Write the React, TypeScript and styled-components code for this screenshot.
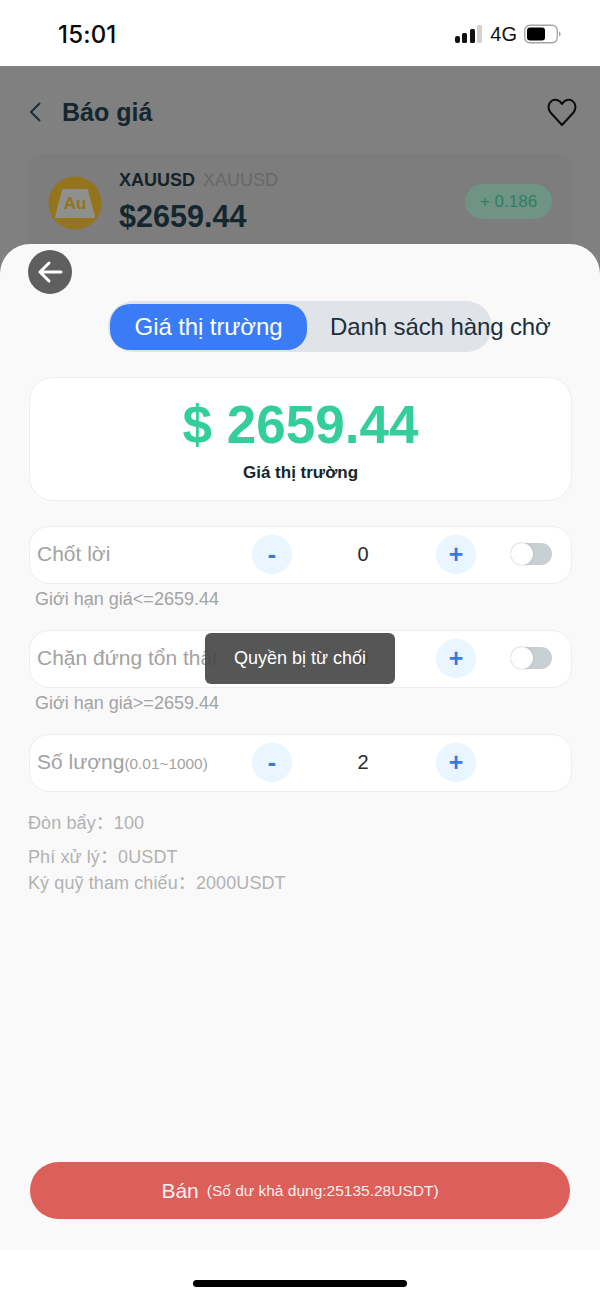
import styled, { createGlobalStyle } from "styled-components";

const GlobalStyle = createGlobalStyle`
    html, body {
        margin: 0;
        padding: 0;
        background: #ffffff;
        font-family: "Liberation Sans", Arial, sans-serif;
    }
    * {
        box-sizing: border-box;
    }
`;

const Screen = styled.div`
    position: relative;
    width: 600px;
    height: 1298px;
    display: flex;
    flex-direction: column;
    overflow: hidden;
    background: #ffffff;
`;

const StatusBar = styled.div`
    height: 66px;
    flex: none;
    display: flex;
    align-items: center;
    justify-content: space-between;
    padding: 2px 39px 0 58px;
    background: #ffffff;
`;

const Clock = styled.span`
    font-size: 24px;
    font-weight: 500;
    color: #0a0a0a;
    font-family: "Inter", "Liberation Sans", sans-serif;
    letter-spacing: 0.2px;
`;

const StatusIcons = styled.div`
    display: flex;
    align-items: center;
    gap: 7px;
`;

const NetworkLabel = styled.span`
    font-size: 20px;
    color: #111111;
`;

const Backdrop = styled.div`
    height: 208px;
    flex: none;
    background: #808080;
    overflow: hidden;
    padding: 0 23px 0 28px;
`;

const NavBar = styled.div`
    height: 88px;
    padding-top: 4px;
    display: flex;
    align-items: center;
`;

const NavTitle = styled.h1`
    margin: 0 0 0 18px;
    flex: 1;
    font-size: 25px;
    font-weight: 700;
    color: #14262e;
`;

const QuoteCard = styled.div`
    height: 120px;
    width: 544px;
    display: flex;
    align-items: flex-start;
    padding: 14px 20px 0 20px;
    background: #7d7d7d;
    border-radius: 12px 12px 0 0;
`;

const LogoSlot = styled.div`
    flex: none;
    padding-top: 8px;
`;

const QuoteText = styled.div`
    flex: 1;
    margin-left: 17px;
`;

const SymbolLine = styled.div`
    font-size: 18px;
    line-height: 24px;
    font-weight: 700;
    color: #14232a;
    span {
        font-weight: 400;
        color: #686868;
        margin-left: 8px;
    }
`;

const QuotePrice = styled.div`
    margin-top: 6px;
    font-size: 30.6px;
    line-height: 36px;
    font-weight: 700;
    color: #14262e;
`;

const ChangeBadge = styled.div`
    margin-top: 16px;
    width: 87px;
    height: 35px;
    border-radius: 18px;
    background: #6f9384;
    color: #2f8062;
    font-size: 17px;
    display: flex;
    align-items: center;
    justify-content: center;
`;

const Sheet = styled.section`
    position: relative;
    margin-top: -30px;
    height: 1006px;
    flex: none;
    padding: 6px 28px 0;
    display: flex;
    flex-direction: column;
    background: #f9f9fa;
    border-radius: 30px 30px 0 0;
`;

const BackCircle = styled.div`
    width: 44px;
    height: 44px;
    flex: none;
    border-radius: 50%;
    background: #5f5f5f;
    display: flex;
    align-items: center;
    justify-content: center;
`;

const Tabs = styled.div`
    margin: 7px 0 0 80px;
    width: 384px;
    height: 51px;
    flex: none;
    display: flex;
    align-items: center;
    padding-left: 2px;
    border-radius: 26px;
    background: #e0e3e8;
`;

const Tab = styled.div<{ $active?: boolean }>`
    flex: none;
    width: ${(p) => (p.$active ? "197px" : "auto")};
    height: 46px;
    display: flex;
    align-items: center;
    justify-content: center;
    white-space: nowrap;
    font-size: 24px;
    letter-spacing: -0.1px;
    border-radius: 20px;
    margin-left: ${(p) => (p.$active ? "0" : "23px")};
    background: ${(p) => (p.$active ? "#3a7cf6" : "transparent")};
    color: ${(p) => (p.$active ? "#ffffff" : "#1c2f3a")};
`;

const PriceCard = styled.div`
    margin: 25px 0 0 1px;
    width: 543px;
    height: 124px;
    flex: none;
    display: flex;
    flex-direction: column;
    align-items: center;
    background: #ffffff;
    border: 1px solid #eeeeef;
    border-radius: 24px;
`;

const BigPrice = styled.div`
    margin-top: 18px;
    height: 58px;
    line-height: 58px;
    font-size: 53px;
    font-weight: 700;
    color: #34cf98;
`;

const BigLabel = styled.div`
    margin-top: 9px;
    font-size: 17px;
    font-weight: 700;
    color: #14262e;
`;

const FieldRow = styled.div<{ $first?: boolean }>`
    margin: ${(p) => (p.$first ? "25px" : "0")} 0 0 1px;
    width: 543px;
    height: 58px;
    flex: none;
    display: grid;
    grid-template-columns: 215px 40px 144px 40px 35px 41px;
    align-items: center;
    padding: 0 0 2px 7px;
    background: #ffffff;
    border: 1px solid #eeeeef;
    border-radius: 20px;
`;

const FieldLabel = styled.div`
    font-size: 21px;
    color: #a2a2a2;
    white-space: nowrap;
    small {
        font-size: 15.4px;
    }
`;

const StepButton = styled.div`
    width: 40px;
    height: 39px;
    border-radius: 50%;
    background: #e9f5ff;
    color: #3a78de;
    display: flex;
    align-items: center;
    justify-content: center;
    font-size: 25px;
    font-weight: 700;
`;

const FieldValue = styled.div`
    text-align: center;
    padding-right: 2px;
    font-size: 20px;
    color: #2b2b2b;
`;

const Toggle = styled.div`
    grid-column: 6;
    position: relative;
    width: 41px;
    height: 22px;
    border-radius: 11px;
    background: #c8d0d4;
    &::after {
        content: "";
        position: absolute;
        left: 0;
        top: 0;
        width: 22px;
        height: 22px;
        border-radius: 50%;
        background: #ffffff;
        box-shadow: 0 0 2px rgba(0, 0, 0, 0.25);
    }
`;

const Hint = styled.div`
    height: 46px;
    flex: none;
    padding: 5px 0 0 7px;
    font-size: 18px;
    line-height: 20px;
    color: #a3a3a3;
`;

const InfoList = styled.div`
    margin-top: 21px;
    display: flex;
    flex-direction: column;
    font-family: "Liberation Sans", "Noto Sans CJK SC", sans-serif;
    font-size: 18px;
    line-height: 20px;
    letter-spacing: 0.1px;
    color: #b2b2b2;
`;

const InfoLine = styled.div<{ $gap?: number }>`
    margin-top: ${(p) => p.$gap ?? 0}px;
`;

const SellButton = styled.div`
    margin: auto 0 31px 2px;
    width: 540px;
    height: 57px;
    flex: none;
    border-radius: 29px;
    background: #dd5f59;
    color: #fdf1f0;
    display: flex;
    align-items: center;
    justify-content: center;
    font-size: 21px;
    small {
        font-size: 15.5px;
        margin-left: 8px;
    }
`;

const HomeArea = styled.div`
    flex: 1;
    display: flex;
    justify-content: center;
    padding-top: 30px;
    background: #ffffff;
`;

const HomeBar = styled.div`
    width: 214px;
    height: 7px;
    border-radius: 4px;
    background: #000000;
`;

const Toast = styled.div`
    position: absolute;
    left: 205px;
    top: 633px;
    width: 190px;
    height: 51px;
    display: flex;
    align-items: center;
    justify-content: center;
    border-radius: 6px;
    background: rgba(72, 72, 72, 0.92);
    color: #ffffff;
    font-size: 18px;
`;

function SignalIcon() {
    return (
        <svg width="29" height="20" viewBox="0 0 29 20">
            <rect x="1" y="12" width="5" height="7" rx="2" fill="#111" />
            <rect x="8" y="9" width="5" height="10" rx="1.5" fill="#111" />
            <rect x="16" y="5" width="5" height="14" rx="1.5" fill="#111" />
            <rect x="23" y="1" width="5" height="18" rx="1.5" fill="#d2d2d2" />
        </svg>
    );
}

function BatteryIcon() {
    return (
        <svg width="37" height="20" viewBox="0 0 37 20">
            <rect x="0.75" y="1.25" width="32.500" height="17.500" rx="5" fill="none" stroke="#a4a4a4" strokeWidth="1.3" />
            <rect x="3" y="3.500" width="18" height="13" rx="3" fill="#000" />
            <path d="M35 7.500c1.200.4 1.600 1.400 1.600 2.500s-.4 2.100-1.600 2.500z" fill="#a4a4a4" />
        </svg>
    );
}

function ChevronIcon() {
    return (
        <svg width="16" height="24" viewBox="0 0 16 24">
            <path d="M12 3 3 12l9 9" fill="none" stroke="#14303c" strokeWidth="2" />
        </svg>
    );
}

function HeartIcon() {
    return (
        <svg width="30" height="30" viewBox="0 0 30 30">
            <path
                d="M15 28 3.500 15.500C.5 12 1 6.500 4.500 4c3.500-2.300 8-1.300 10.500 3 2.500-4.300 7-5.300 10.500-3 3.500 2.500 4 8 1 11.500z"
                fill="none"
                stroke="#0c0c0c"
                strokeWidth="2"
                strokeLinejoin="round"
            />
        </svg>
    );
}

function GoldLogo() {
    return (
        <svg width="54" height="54" viewBox="0 0 54 54" display="block">
            <circle cx="27" cy="27" r="26.500" fill="#94741c" />
            <path d="M15 14h24l7 27H8z" fill="#8f8f8d" stroke="#8f8f8d" strokeWidth="2" strokeLinejoin="round" />
            <text x="27" y="33" textAnchor="middle" fontSize="17" fontWeight="700" fill="#94741c" fontFamily="Liberation Sans, sans-serif">
                Au
            </text>
        </svg>
    );
}

function ArrowLeftIcon() {
    return (
        <svg width="26" height="24" viewBox="0 0 26 24">
            <path d="M24 12H3M12 3l-9 9 9 9" fill="none" stroke="#ffffff" strokeWidth="3" strokeLinecap="round" strokeLinejoin="round" />
        </svg>
    );
}

export default function App() {
    return (
        <Screen>
            <GlobalStyle />
            <StatusBar>
                <Clock>15:01</Clock>
                <StatusIcons>
                    <SignalIcon />
                    <NetworkLabel>4G</NetworkLabel>
                    <BatteryIcon />
                </StatusIcons>
            </StatusBar>
            <Backdrop>
                <NavBar>
                    <ChevronIcon />
                    <NavTitle>Báo giá</NavTitle>
                    <HeartIcon />
                </NavBar>
                <QuoteCard>
                    <LogoSlot>
                        <GoldLogo />
                    </LogoSlot>
                    <QuoteText>
                        <SymbolLine>
                            XAUUSD<span>XAUUSD</span>
                        </SymbolLine>
                        <QuotePrice>$2659.44</QuotePrice>
                    </QuoteText>
                    <ChangeBadge>+ 0.186</ChangeBadge>
                </QuoteCard>
            </Backdrop>
            <Sheet>
                <BackCircle>
                    <ArrowLeftIcon />
                </BackCircle>
                <Tabs>
                    <Tab $active>Giá thị trường</Tab>
                    <Tab>Danh sách hàng chờ</Tab>
                </Tabs>
                <PriceCard>
                    <BigPrice>$ 2659.44</BigPrice>
                    <BigLabel>Giá thị trường</BigLabel>
                </PriceCard>
                <FieldRow $first>
                    <FieldLabel>Chốt lời</FieldLabel>
                    <StepButton>-</StepButton>
                    <FieldValue>0</FieldValue>
                    <StepButton>+</StepButton>
                    <Toggle />
                </FieldRow>
                <Hint>Giới hạn giá&lt;=2659.44</Hint>
                <FieldRow>
                    <FieldLabel>Chặn đứng tổn thất</FieldLabel>
                    <StepButton>-</StepButton>
                    <FieldValue>0</FieldValue>
                    <StepButton>+</StepButton>
                    <Toggle />
                </FieldRow>
                <Hint>Giới hạn giá&gt;=2659.44</Hint>
                <FieldRow>
                    <FieldLabel>
                        Số lượng<small>(0.01~1000)</small>
                    </FieldLabel>
                    <StepButton>-</StepButton>
                    <FieldValue>2</FieldValue>
                    <StepButton>+</StepButton>
                </FieldRow>
                <InfoList>
                    <InfoLine>Đòn bẩy：100</InfoLine>
                    <InfoLine $gap={14}>Phí xử lý：0USDT</InfoLine>
                    <InfoLine $gap={6}>Ký quỹ tham chiếu：2000USDT</InfoLine>
                </InfoList>
                <SellButton>
                    Bán<small>(Số dư khả dụng:25135.28USDT)</small>
                </SellButton>
            </Sheet>
            <HomeArea>
                <HomeBar />
            </HomeArea>
            <Toast>Quyền bị từ chối</Toast>
        </Screen>
    );
}
